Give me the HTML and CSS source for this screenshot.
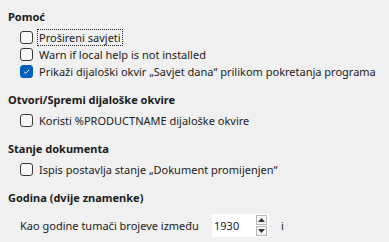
FILE: index.html
```html
<!DOCTYPE html>
<html lang="hr">
  <head>
    <meta charset="utf-8" />
    <title>Općenito</title>
    <link rel="stylesheet" href="styles.css">
  </head>
  <body>
    <div class="page">
      <div class="group">
        <h2 class="group-title">Pomoć</h2>
        <div class="group-body">
          <label class="check-row">
            <span class="box"></span>
            <span class="check-text focus">Prošireni savjeti</span>
          </label>
          <label class="check-row">
            <span class="box"></span>
            <span class="check-text">Warn if local help is not installed</span>
          </label>
          <label class="check-row">
            <span class="box checked">
              <svg viewBox="0 0 13 13" width="13" height="13"><path d="M3.5 6.8 L5.6 8.8 L9.6 4.4" fill="none" stroke="#fff" stroke-width="1.1" /></svg>
            </span>
            <span class="check-text">Prikaži dijaloški okvir „Savjet dana“ prilikom pokretanja programa</span>
          </label>
        </div>
      </div>

      <div class="group">
        <h2 class="group-title">Otvori/Spremi dijaloške okvire</h2>
        <div class="group-body">
          <label class="check-row">
            <span class="box"></span>
            <span class="check-text">Koristi %PRODUCTNAME dijaloške okvire</span>
          </label>
        </div>
      </div>

      <div class="group">
        <h2 class="group-title">Stanje dokumenta</h2>
        <div class="group-body">
          <label class="check-row">
            <span class="box"></span>
            <span class="check-text">Ispis postavlja stanje „Dokument promijenjen“</span>
          </label>
        </div>
      </div>

      <div class="group">
        <h2 class="group-title">Godina (dvije znamenke)</h2>
        <div class="group-body year-row">
          <span class="year-label">Kao godine tumači brojeve između</span>
          <div class="spin">
            <span class="spin-value">1930</span>
            <div class="spin-buttons">
              <span class="spin-btn"><svg viewBox="0 0 7 4" width="7" height="4"><path d="M0 4 L3.5 0 L7 4 Z" fill="#333" /></svg></span>
              <span class="spin-btn"><svg viewBox="0 0 7 4" width="7" height="4"><path d="M0 0 L3.5 4 L7 0 Z" fill="#333" /></svg></span>
            </div>
          </div>
          <span class="year-and">i</span>
        </div>
      </div>
    </div>
  </body>
</html>
```

FILE: styles.css
```css
html, body {
  margin: 0;
  padding: 0;
  background-color: #f0f0f0;
}

body {
  font-family: 'Noto Sans', 'Open Sans', sans-serif;
  font-size: 11px;
  color: #1b1b1b;
}

.page {
  padding: 8px 8px 0 8px;
  display: flex;
  flex-direction: column;
  gap: 11px;
}

.group-title {
  margin: 0;
  font-size: 11px;
  font-weight: bold;
  line-height: 17px;
}

.group-body {
  padding: 4px 0 0 12px;
  display: flex;
  flex-direction: column;
}

.check-row {
  display: flex;
  align-items: center;
  gap: 4px;
  height: 17px;
}

.box {
  width: 11px;
  height: 11px;
  border: 1px solid #3a3a3a;
  border-radius: 3px;
  background-color: #f7f7f7;
  display: flex;
  align-items: center;
  justify-content: center;
  flex-shrink: 0;
}

.box.checked {
  background-color: #005fb8;
  border-color: #005fb8;
}

.box svg {
  display: block;
}

.check-text {
  line-height: 15px;
  padding: 0 1px;
  border: 1px dotted transparent;
  white-space: nowrap;
}

.check-text.focus {
  border-color: #222;
}

.year-row {
  flex-direction: row;
  align-items: center;
  padding-top: 8px;
}

.year-label {
  width: 187px;
  margin-right: 5px;
}

.spin {
  width: 57px;
  height: 23px;
  box-sizing: border-box;
  background-color: #fff;
  display: flex;
  align-items: center;
}

.spin-value {
  flex: 1;
  padding-left: 2px;
}

.spin-buttons {
  display: flex;
  flex-direction: column;
  gap: 1px;
  margin-right: 2px;
}

.spin-btn {
  width: 9px;
  height: 8px;
  border: 1px solid #b5b5b5;
  background-color: #f5f5f5;
  display: flex;
  align-items: center;
  justify-content: center;
}

.spin-btn svg {
  display: block;
}

.year-and {
  margin-left: 12px;
}
```
